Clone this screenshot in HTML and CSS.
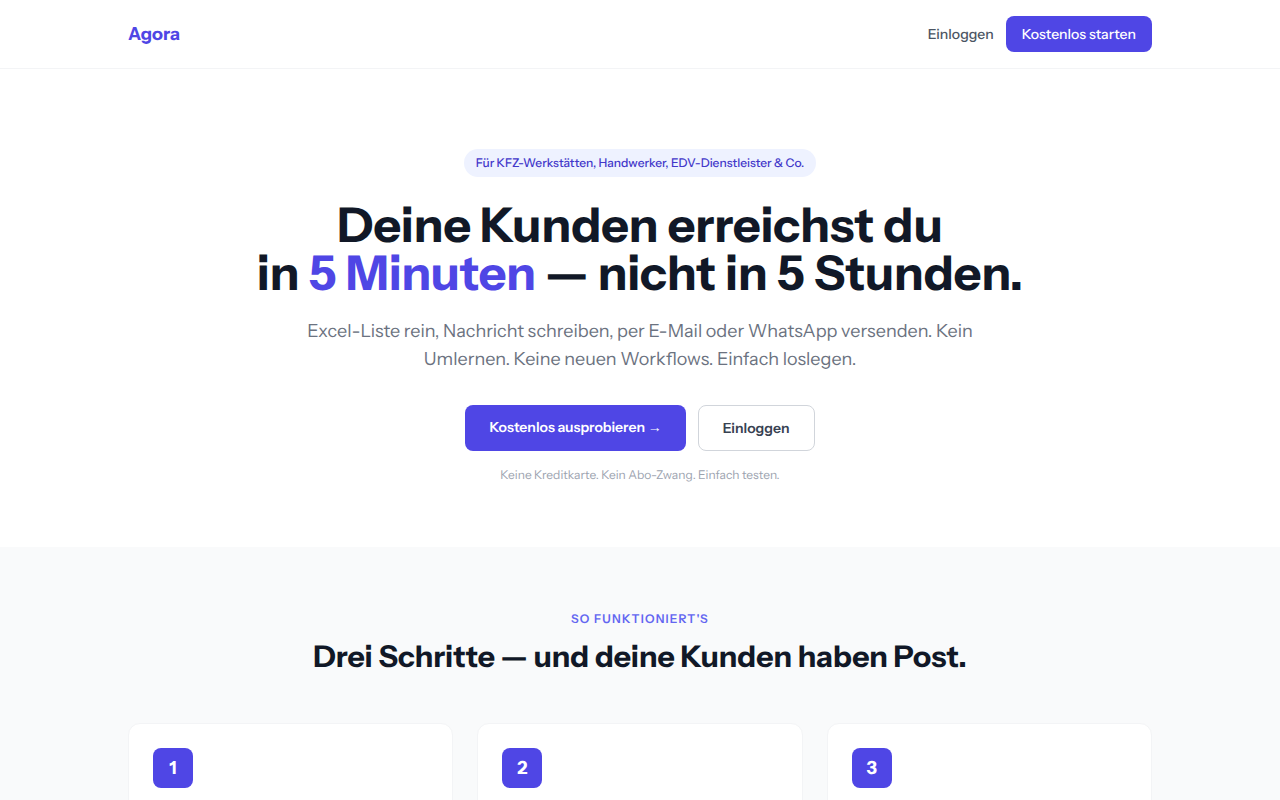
FILE: index.html
```html
<!DOCTYPE html>
<html lang="de">
<head>
<meta charset="utf-8">
<meta name="viewport" content="width=device-width, initial-scale=1">
<title>Agora</title>
<link rel="stylesheet" href="styles.css">
</head>
<body>
<header class="site-header">
  <div class="container nav">
    <a class="brand" href="#">Agora</a>
    <nav class="nav-links">
      <a class="nav-link" href="#">Einloggen</a>
      <a class="btn-small" href="#">Kostenlos starten</a>
    </nav>
  </div>
</header>
<main>
  <section class="hero">
    <span class="pill">Für KFZ-Werkstätten, Handwerker, EDV-Dienstleister &amp; Co.</span>
    <h1 class="hero-title">Deine Kunden erreichst du<br>in <span class="accent">5 Minuten</span> — nicht in 5 Stunden.</h1>
    <p class="hero-text">Excel-Liste rein, Nachricht schreiben, per E-Mail oder WhatsApp versenden. Kein Umlernen. Keine neuen Workflows. Einfach loslegen.</p>
    <div class="hero-actions">
      <a class="btn btn-primary" href="#">Kostenlos ausprobieren <span class="arrow">→</span></a>
      <a class="btn btn-outline" href="#">Einloggen</a>
    </div>
    <p class="hero-note">Keine Kreditkarte. Kein Abo-Zwang. Einfach testen.</p>
  </section>
  <section class="steps">
    <div class="container">
      <p class="eyebrow">So funktioniert's</p>
      <h2 class="steps-title">Drei Schritte — und deine Kunden haben Post.</h2>
      <div class="cards">
        <article class="card"><span class="number">1</span></article>
        <article class="card"><span class="number">2</span></article>
        <article class="card"><span class="number">3</span></article>
      </div>
    </div>
  </section>
</main>
</body>
</html>
```
FILE: styles.css
```css
*, *::before, *::after { box-sizing: border-box; }
body {
  margin: 0;
  background: #fff;
  color: #111827;
  font-family: "Instrument Sans", Inter, "Liberation Sans", sans-serif;
  font-size: 16px;
  line-height: 24px;
  text-rendering: geometricPrecision;
}
h1, h2, p { margin: 0; }
a { color: inherit; text-decoration: none; }
.container { max-width: 1072px; margin: 0 auto; padding: 0 24px; }
.site-header { border-bottom: 1px solid #f3f4f6; }
.nav { display: flex; align-items: center; justify-content: space-between; padding-top: 16px; padding-bottom: 16px; }
.brand { color: #4f46e5; font-size: 18px; line-height: 28px; font-weight: 700; }
.nav-links { display: flex; align-items: center; gap: 12px; font-size: 14px; line-height: 20px; font-weight: 500; }
.nav-link { color: #4b5563; }
.btn-small { padding: 8px 16px; border-radius: 8px; background: #4f46e5; color: #fff; }
.hero { display: flex; flex-direction: column; align-items: center; padding: 80px 24px 64px; text-align: center; }
.pill { padding: 6px 12px; border-radius: 14px; background: #eef2ff; color: #4338ca; font-size: 12px; line-height: 16px; font-weight: 500; }
.hero-title { margin-top: 24px; font-size: 48px; line-height: 48px; font-weight: 700; }
.accent { color: #4f46e5; }
.hero-text { max-width: 672px; margin-top: 20px; color: #6b7280; font-size: 18px; line-height: 28px; }
.hero-actions { display: flex; gap: 12px; margin-top: 32px; }
.btn { padding: 12px 24px; border-radius: 8px; font-size: 14px; line-height: 20px; font-weight: 600; }
.btn-primary { background: #4f46e5; color: #fff; }
.arrow { font-family: "Noto Sans", sans-serif; }
.btn-outline { border: 1px solid #d1d5db; color: #374151; }
.hero-note { margin-top: 16px; color: #9ca3af; font-size: 12px; line-height: 16px; }
.steps { padding: 64px 0; background: #f9fafb; text-align: center; }
.eyebrow { color: #6366f1; font-size: 12px; line-height: 16px; font-weight: 600; letter-spacing: 0.1em; text-transform: uppercase; }
.steps-title { margin-top: 12px; font-size: 30px; line-height: 36px; font-weight: 700; }
.cards { display: grid; grid-template-columns: repeat(3, 1fr); gap: 24px; margin-top: 48px; text-align: left; }
.card { padding: 24px; border: 1px solid #f3f4f6; border-radius: 12px; background: #fff; }
.number { display: flex; align-items: center; justify-content: center; width: 40px; height: 40px; margin-bottom: 64px; border-radius: 8px; background: #4f46e5; color: #fff; font-size: 18px; line-height: 28px; font-weight: 700; }
```
